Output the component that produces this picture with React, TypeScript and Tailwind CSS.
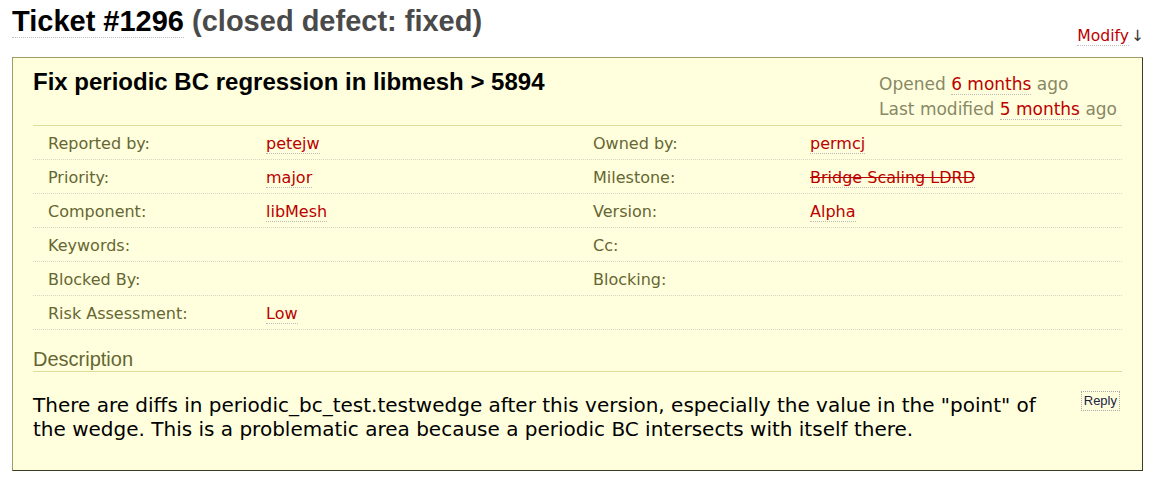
import React from "react";

type Field = {
  label: string;
  value?: string;
  strike?: boolean;
};

const rows: [Field, Field | null][] = [
  [{ label: "Reported by:", value: "petejw" }, { label: "Owned by:", value: "permcj" }],
  [{ label: "Priority:", value: "major" }, { label: "Milestone:", value: "Bridge Scaling LDRD", strike: true }],
  [{ label: "Component:", value: "libMesh" }, { label: "Version:", value: "Alpha" }],
  [{ label: "Keywords:" }, { label: "Cc:" }],
  [{ label: "Blocked By:" }, { label: "Blocking:" }],
  [{ label: "Risk Assessment:", value: "Low" }, null],
];

function Link({ children, strike }: { children: React.ReactNode; strike?: boolean }) {
  return (
    <span
      className={
        "text-[#bb0000] border-b border-dotted border-[#bbbbbb] " + (strike ? "line-through" : "")
      }
    >
      {children}
    </span>
  );
}

function Cell({ field }: { field: Field | null }) {
  return (
    <>
      <div className="pl-[15px] text-[#666633]">{field ? field.label : ""}</div>
      <div className="pl-[15px]">
        {field && field.value ? <Link strike={field.strike}>{field.value}</Link> : null}
      </div>
    </>
  );
}

export default function App() {
  return (
    <div className="w-[1151px] h-[479px] bg-white font-['DejaVu_Sans',sans-serif] overflow-hidden">
      {/* page title */}
      <div className="flex justify-between h-[57px] pl-[12px] pr-[7px]">
        <h1 className="self-start pt-[3px] text-[29px] leading-[36px] font-bold font-['Liberation_Sans',Arial,sans-serif] text-black">
          <span className="border-b border-dotted border-[#bbbbbb]">Ticket #1296</span>{" "}
          <span className="text-[#4a4a4a]">(closed defect: fixed)</span>
        </h1>
        <div className="self-end mb-[12px] text-[15.6px] leading-[18px]">
          <Link>Modify</Link>
          <span className="text-[#333] ml-[2px]">↓</span>
        </div>
      </div>

      {/* ticket box */}
      <div className="ml-[12px] w-[1131px] h-[414px] border border-t-[#a09c66] border-l-[#a09c66] border-r-[#3c3c22] border-b-[#3c3c22] bg-[#ffffdd] px-[20px]">
        <div className="flex justify-between border-b border-[#dddd99]">
          <h2 className="mt-[10px] text-[24px] leading-[28px] font-bold font-['Liberation_Sans',Arial,sans-serif] text-black">
            Fix periodic BC regression in libmesh &gt; 5894
          </h2>
          <div className="mt-[14px] mb-[3px] mr-[5px] text-[17px] leading-[25px] text-[#888866]">
            <div>
              Opened <Link>6 months</Link> ago
            </div>
            <div>
              Last modified <Link>5 months</Link> ago
            </div>
          </div>
        </div>

        <div className="grid grid-cols-[218px_327px_217px_327px] text-[16px]">
          {rows.map((r, i) => (
            <div
              key={i}
              className="col-span-4 grid grid-cols-subgrid h-[34px] pt-[2px] items-center border-b border-dotted border-[#d7d7c0]"
            >
              <Cell field={r[0]} />
              <Cell field={r[1]} />
            </div>
          ))}
        </div>

        <h3 className="mt-[17px] text-[20px] leading-[24px] font-['Liberation_Sans',Arial,sans-serif] text-[#666633] border-b border-[#dddd99]">
          Description
        </h3>

        <div className="flex justify-between items-start mt-[21px]">
          <p className="w-[1030px] text-[20px] leading-[24px] text-black">
            There are diffs in periodic_bc_test.testwedge after this version, especially the value in the "point" of the wedge. This is a problematic area because a periodic BC intersects with itself there.
          </p>
          <button className="mt-[-2px] mr-[2px] h-[20px] px-[2px] border border-dotted border-[#aaaaaa] text-[13px] leading-[18px] font-['Liberation_Sans',Arial,sans-serif] text-[#222244]">
            Reply
          </button>
        </div>
      </div>
    </div>
  );
}
